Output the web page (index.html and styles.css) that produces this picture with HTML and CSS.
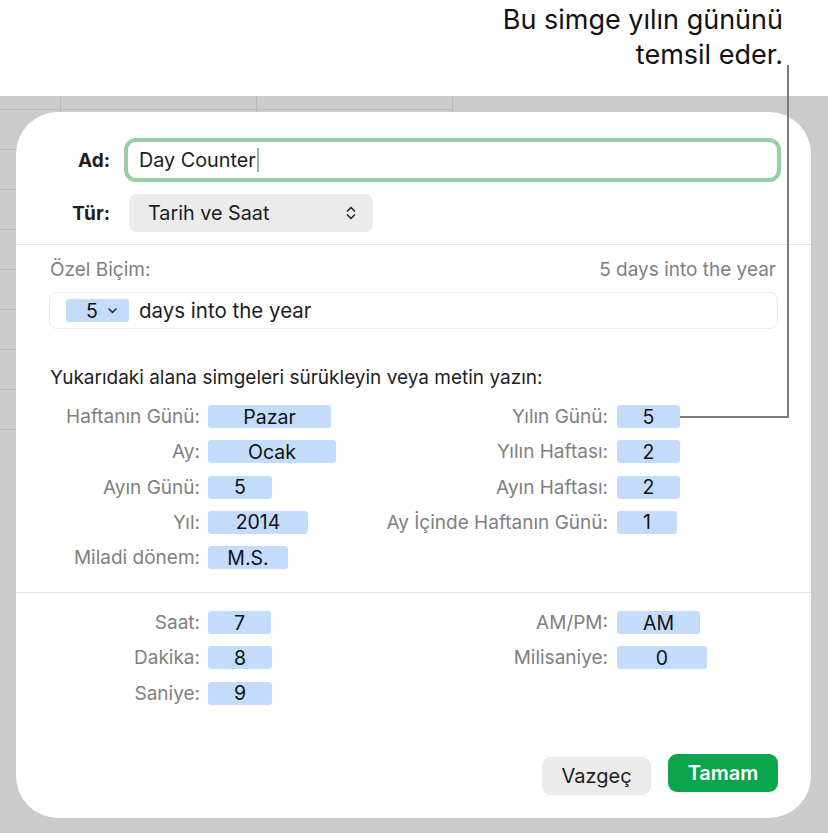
FILE: index.html
```html
<!DOCTYPE html>
<html>
<head>
<title>Özel Biçim</title>

<link rel="stylesheet" href="styles.css">
</head>

<body>

<div class="callout">Bu simge yılın gününü<br>temsil eder.</div>

<div class="sheet">
<div class="dialog">

<div class="head">
<label class="name-label">Ad:</label>
<div class="name-input">Day Counter<span class="caret"></span></div>
<label class="name-label">Tür:</label>
<div class="popup">
<span>Tarih ve Saat</span>
<svg class="updown" width="10" height="18" viewBox="0 0 10 18">
<path d="M1.5 7 L5 3.5 L8.5 7 M1.5 11 L5 14.5 L8.5 11" fill="none" stroke="#2b2b2b" stroke-width="1.7" stroke-linecap="round" stroke-linejoin="round"/>
</svg>
</div>
</div>

<div class="custom">
<div class="custom-top">
<span class="muted">Özel Biçim:</span>
<span class="muted">5 days into the year</span>
</div>
<div class="format-field">
<span class="token token-menu">5
<svg width="9" height="6" viewBox="0 0 9 6"><path d="M1 1 L4.5 4.5 L8 1" fill="none" stroke="#2b2b2b" stroke-width="1.6" stroke-linecap="round" stroke-linejoin="round"/></svg>
</span>
<span class="format-text">days into the year</span>
</div>
<p class="hint">Yukarıdaki alana simgeleri sürükleyin veya metin yazın:</p>
</div>

<div class="tokens date">
<span class="lbl">Haftanın Günü:</span><span><span class="token" style="width:123px">Pazar</span></span>
<span class="lbl">Yılın Günü:</span><span><span class="token" style="width:63px">5</span></span>

<span class="lbl">Ay:</span><span><span class="token" style="width:128px">Ocak</span></span>
<span class="lbl">Yılın Haftası:</span><span><span class="token" style="width:63px">2</span></span>

<span class="lbl">Ayın Günü:</span><span><span class="token" style="width:64px">5</span></span>
<span class="lbl">Ayın Haftası:</span><span><span class="token" style="width:63px">2</span></span>

<span class="lbl">Yıl:</span><span><span class="token" style="width:100px">2014</span></span>
<span class="lbl">Ay İçinde Haftanın Günü:</span><span><span class="token" style="width:60px">1</span></span>

<span class="lbl">Miladi dönem:</span><span><span class="token" style="width:80px">M.S.</span></span>
<span></span><span></span>
</div>

<div class="tokens time">
<span class="lbl">Saat:</span><span><span class="token" style="width:63px">7</span></span>
<span class="lbl">AM/PM:</span><span><span class="token" style="width:83px">AM</span></span>

<span class="lbl">Dakika:</span><span><span class="token" style="width:64px">8</span></span>
<span class="lbl">Milisaniye:</span><span><span class="token" style="width:90px">0</span></span>

<span class="lbl">Saniye:</span><span><span class="token" style="width:64px">9</span></span>
<span></span><span></span>
</div>

<div class="actions">
<button class="cancel">Vazgeç</button>
<button class="ok">Tamam</button>
</div>

</div>
</div>

<svg class="pointer" width="828" height="836" viewBox="0 0 828 836">
<path d="M788 65 V417 H680" fill="none" stroke="#7b7b7b" stroke-width="2"/>
</svg>

</body>
</html>
```

FILE: styles.css
```css
body{
margin:0;
height:836px;
background:white;
font-family:"Inter","Liberation Sans",sans-serif;
color:#1d1d1f;
position:relative;
overflow:hidden;
}

.callout{
height:96px;
box-sizing:border-box;
padding:2px 45px 0 0;
text-align:right;
font-size:27px;
line-height:35px;
color:#111;
}

.sheet{
height:737px;
box-sizing:border-box;
padding:16px 17px 15px 16px;
background-color:#cbcbcb;
background-image:
repeating-linear-gradient(to bottom, transparent 0 13px, #b9b9b9 13px 14px, transparent 14px 40px),
linear-gradient(to right, transparent 60px, #b9b9b9 60px 61px, transparent 61px 256px, #b9b9b9 256px 257px, transparent 257px 452px, #b9b9b9 452px 453px, transparent 453px);
background-size:453px 340px, 453px 340px;
background-repeat:no-repeat;
}

.dialog{
height:706px;
box-sizing:border-box;
background:white;
border-radius:42px;
display:flex;
flex-direction:column;
padding-bottom:23px;
}

/* name + type */

.head{
display:grid;
grid-template-columns:94px 1fr;
column-gap:14px;
row-gap:12px;
padding:26px 30px 12px 0;
align-items:center;
}

.name-label{
text-align:right;
font-weight:700;
font-size:19px;
}

.name-input{
height:44px;
box-sizing:border-box;
border:4px solid #96cfa2;
border-radius:12px;
padding-left:11px;
font-size:19.8px;
display:flex;
align-items:center;
}

.caret{
display:inline-block;
width:2px;
height:24px;
background:#86c896;
margin-left:1px;
}

.popup{
margin-left:5px;
width:244px;
height:38px;
box-sizing:border-box;
background:#ebebeb;
border-radius:8px;
padding:0 17px 0 19px;
font-size:19.8px;
display:flex;
align-items:center;
justify-content:space-between;
}

/* custom format */

.custom{
border-top:1px solid #e6e6e6;
padding:14px 33px 0 33px;
}

.custom-top{
display:flex;
justify-content:space-between;
padding:0 2px 0 1px;
line-height:22px;
}

.muted{
color:#808080;
font-size:19px;
}

.format-field{
margin-top:11px;
height:37px;
box-sizing:border-box;
border:1px solid #ececec;
border-radius:8px;
padding-left:16px;
display:flex;
align-items:center;
}

.format-text{
margin-left:10px;
font-size:20.5px;
}

.hint{
margin:38px 0 0 1px;
font-size:19px;
line-height:22px;
}

/* token grid */

.tokens{
display:grid;
grid-template-columns:192px 150px 259px 1fr;
grid-auto-rows:23px;
row-gap:12.25px;
align-items:center;
}

.date{
margin-top:16px;
padding-bottom:23px;
}

.time{
border-top:1px solid #e6e6e6;
padding-top:18px;
}

.lbl{
text-align:right;
padding-right:8px;
color:#808080;
font-size:19px;
white-space:nowrap;
}

.lbl:nth-child(4n+3){
padding-right:9px;
}

.token{
display:inline-flex;
align-items:center;
justify-content:center;
height:23px;
background:#c4dcfc;
border-radius:3px;
font-size:19.5px;
color:#111;
}

.token-menu{
width:63px;
gap:10px;
padding-left:8px;
box-sizing:border-box;
}

/* buttons */

.actions{
margin-top:auto;
display:flex;
justify-content:flex-end;
align-items:flex-end;
gap:17px;
padding-right:33px;
}

button{
height:38px;
border:none;
border-radius:9px;
font-family:inherit;
font-size:20px;
cursor:pointer;
}

.cancel{
width:109px;
background:#ebebeb;
color:#1d1d1f;
}

.ok{
width:110px;
margin-bottom:3px;
background:#0aa54c;
color:white;
font-weight:600;
}

.pointer{
position:absolute;
left:0;
top:0;
pointer-events:none;
}
```
